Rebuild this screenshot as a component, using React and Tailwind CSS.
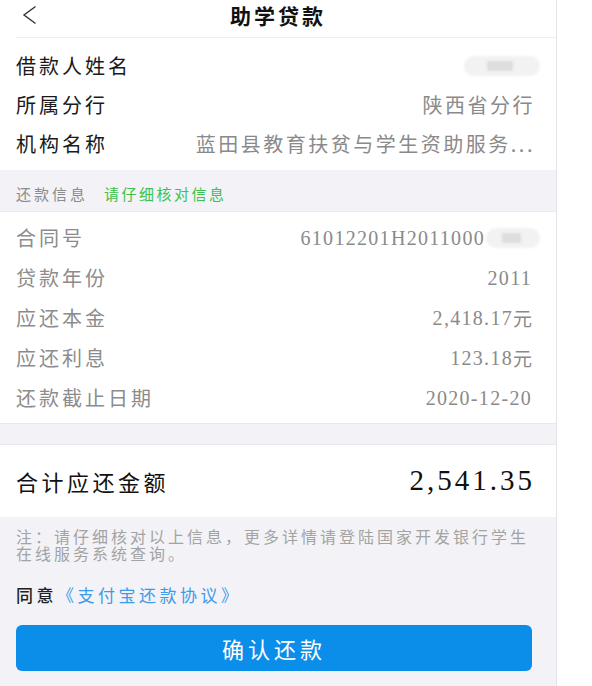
import React from 'react';

const cjk = { fontFamily: '"Noto Sans CJK SC", "Noto Sans", sans-serif' };
const serif = { fontFamily: '"Liberation Serif", "Noto Sans CJK SC", serif' };

const basicRows = [
  { label: '借款人姓名', value: null },
  { label: '所属分行', value: '陕西省分行' },
  { label: '机构名称', value: '蓝田县教育扶贫与学生资助服务...' },
];

const repayRows = [
  { label: '合同号', value: '61012201H2011000', masked: true },
  { label: '贷款年份', value: '2011' },
  { label: '应还本金', value: '2,418.17', unit: '元' },
  { label: '应还利息', value: '123.18', unit: '元' },
  { label: '还款截止日期', value: '2020-12-20' },
];

function Blur({ className }) {
  return (
    <div className={`relative h-[20px] ${className}`}>
      <div className="absolute inset-0 rounded-full bg-[#f2f2f2] blur-[1px]" />
      <div className="absolute left-[30%] top-[5px] h-[10px] w-[35%] bg-[#dedede] blur-[1px]" />
    </div>
  );
}

export default function App() {
  return (
    <div className="flex w-[592px] h-[686px] bg-white overflow-hidden" style={cjk}>
      <div className="w-[557px] shrink-0 flex flex-col bg-[#f3f3f7] border-r border-[#e4e4e8]">
        {/* header */}
        <div className="bg-white pl-4">
          <div className="relative h-[38px] flex items-center justify-center pb-[6px] border-b border-[#eeeeee]">
            <svg className="absolute left-[5px] top-[5px]" width="16" height="20" viewBox="0 0 16 20" fill="none">
              <path d="M14.5 1.5 L3 10 L14.5 18.5" stroke="#333" strokeWidth="1.4" />
            </svg>
            <span className="text-[21px] font-bold text-[#111] tracking-[3px] -ml-4 leading-none">助学贷款</span>
          </div>
        </div>

        {/* basic info */}
        <div className="bg-white pl-4 pr-6 pt-2 pb-[7px]">
          {basicRows.map((r) => (
            <div key={r.label} className="h-[39px] flex items-center justify-between">
              <span className="text-[20px] tracking-[3px] text-[#1a1a1a] shrink-0">{r.label}</span>
              {r.value ? (
                <span className="text-[20px] tracking-[2.5px] text-[#8a8a8a] whitespace-nowrap -mr-[3px]">{r.value}</span>
              ) : (
                <Blur className="w-[76px] -mr-2" />
              )}
            </div>
          ))}
        </div>

        {/* section title */}
        <div className="h-[42px] flex items-center gap-[16px] pl-4 pt-[8px] border-b border-[#ececf0]">
          <span className="text-[15px] tracking-[3px] text-[#8c8c8c]">还款信息</span>
          <span className="text-[15px] tracking-[2.5px] text-[#3cc24c]">请仔细核对信息</span>
        </div>

        {/* repay info */}
        <div className="bg-white pl-4 pr-6 pt-[6px] pb-[5px] border-b border-[#e8e8ec]">
          {repayRows.map((r) => (
            <div key={r.label} className="h-10 flex items-center justify-between">
              <span className="text-[20px] tracking-[3px] text-[#8c8c8c]">{r.label}</span>
              <div className="flex items-center">
                <span className="text-[20px] tracking-[1.3px] text-[#8a8a8a]" style={serif}>{r.value}</span>
                {r.unit && <span className="text-[19px] text-[#8a8a8a]">{r.unit}</span>}
                {r.masked && <Blur className="w-[54px] -mr-2 ml-[1px]" />}
              </div>
            </div>
          ))}
        </div>

        <div className="h-[21px] border-b border-[#e8e8ec]" />

        {/* total */}
        <div className="bg-white h-[72px] flex items-center justify-between pl-4 pr-6">
          <span className="text-[22px] tracking-[3.5px] text-[#111]">合计应还金额</span>
          <span className="text-[29px] tracking-[3px] text-[#111] -mr-[3px]" style={serif}>2,541.35</span>
        </div>

        {/* note */}
        <p className="pl-4 pr-5 pt-[11px] text-[16px] leading-[17px] tracking-[3px] text-[#a3a3a3]">
          注：请仔细核对以上信息，更多详情请登陆国家开发银行学生在线服务系统查询。
        </p>

        <div className="pl-4 mt-[21px] text-[17px] leading-[24px] tracking-[3.5px]">
          <span className="text-[#222] font-medium">同意</span>
          <span className="text-[#3d9ae8]">《支付宝还款协议》</span>
        </div>

        <div className="pl-4 pr-6 mt-[18px]">
          <button className="w-full h-[46px] rounded-[6px] bg-[#0b8ee9] text-white text-[22px] tracking-[4px]">
            确认还款
          </button>
        </div>
      </div>
    </div>
  );
}
